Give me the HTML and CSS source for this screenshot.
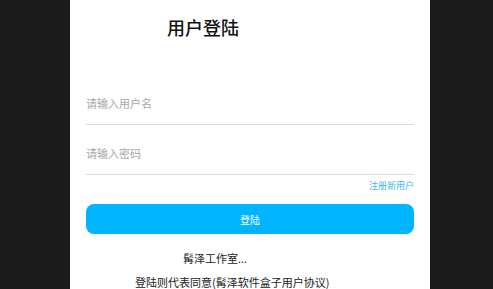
FILE: index.html
```html
<!DOCTYPE html>
<html lang="zh-CN">
<head>
    <meta charset="UTF-8">
    <meta name="viewport" content="width=device-width, initial-scale=1.0">
    <title>用户登陆</title>
    <link rel="stylesheet" href="styles.css">
</head>
<body>
    <main class="login-panel">
        <h1 class="login-title">用户登陆</h1>
        <form class="login-form">
            <input class="login-input" type="text" placeholder="请输入用户名">
            <input class="login-input" type="password" placeholder="请输入密码">
            <a class="link-register" href="#">注册新用户</a>
            <button type="button" class="btn-login">登陆</button>
        </form>
        <p class="studio">髯泽工作室...</p>
        <p class="agreement">登陆则代表同意(髯泽软件盒子用户协议)</p>
    </main>
</body>
</html>
```

FILE: styles.css
```css
html,
body {
    margin: 0;
    height: 100%;
}

body {
    background: #1b1b1b;
    font-family: "Noto Sans CJK SC", "Noto Sans", sans-serif;
    overflow: hidden;
}

.login-panel {
    box-sizing: border-box;
    width: 360px;
    height: 100%;
    margin-left: 70px;
    padding: 18px 16px 0;
    background: #fff;
}

.login-title {
    margin: 0 0 0 81px;
    font-size: 18px;
    line-height: 18px;
    font-weight: 500;
    color: #111;
}

.login-form {
    display: flex;
    flex-direction: column;
    margin-top: 39px;
}

.login-input {
    box-sizing: border-box;
    height: 50px;
    padding: 7px 0 0;
    border: 0;
    border-bottom: 1px solid #dcdcdc;
    outline: none;
    font-family: inherit;
    font-size: 11px;
    color: #333;
    background: transparent;
}

.login-input::placeholder {
    color: #a8a8a8;
}

.link-register {
    align-self: flex-end;
    margin-top: 4px;
    font-size: 9px;
    line-height: 14px;
    color: #3db8ee;
    text-decoration: none;
}

.btn-login {
    height: 30px;
    margin-top: 11px;
    border: 0;
    border-radius: 8px;
    background: #00b4ff;
    color: #fff;
    font-family: inherit;
    font-size: 10px;
}

.studio,
.agreement {
    margin: 0;
    font-size: 11px;
    line-height: 16px;
    color: #222;
}

.studio {
    margin: 16px 0 0 97px;
}

.agreement {
    margin: 8px 0 0 49px;
}
```
